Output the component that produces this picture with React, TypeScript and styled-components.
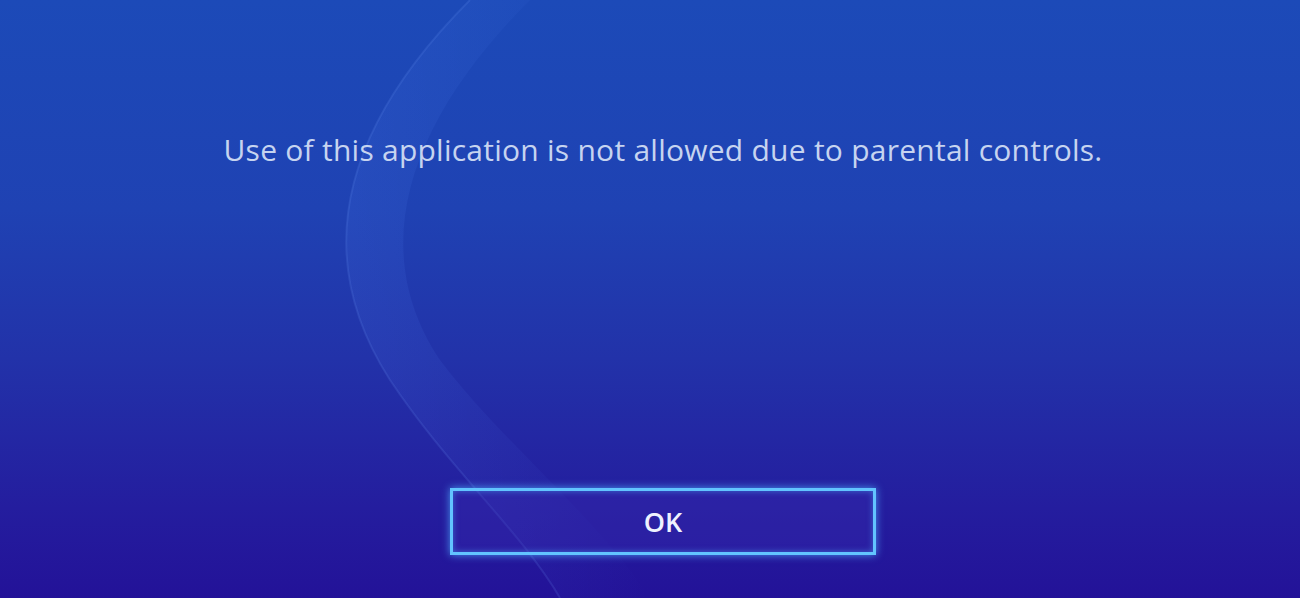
import styled, { createGlobalStyle } from 'styled-components';

const GlobalStyle = createGlobalStyle`
  html, body {
    margin: 0;
    padding: 0;
    height: 100%;
    overflow: hidden;
  }
  #root {
    height: 100%;
  }
`;

export default function App() {
  return (
    <>
      <GlobalStyle />
      <Screen>
        <Wave viewBox="0 0 1300 598" preserveAspectRatio="none" aria-hidden>
          <defs>
            <linearGradient id="band" x1="0" y1="0" x2="1" y2="0">
              <stop offset="0" stopColor="#5a8cff" stopOpacity="0.12" />
              <stop offset="1" stopColor="#5a8cff" stopOpacity="0" />
            </linearGradient>
          </defs>
          <path
            d="M470 0 C 360 110, 300 240, 390 380 C 450 470, 520 530, 560 598 L 650 598 C 600 520, 500 440, 440 360 C 360 240, 420 110, 530 0 Z"
            fill="url(#band)"
          />
          <path
            d="M470 0 C 360 110, 300 240, 390 380 C 450 470, 520 530, 560 598"
            fill="none"
            stroke="#7aa4ff"
            strokeOpacity="0.14"
            strokeWidth="2"
          />
        </Wave>
        <Message>Use of this application is not allowed due to parental controls.</Message>
        <Spacer />
        <OkButton>OK</OkButton>
      </Screen>
    </>
  );
}

const Screen = styled.div`
  position: relative;
  width: 1300px;
  height: 598px;
  overflow: hidden;
  display: flex;
  flex-direction: column;
  align-items: center;
  padding: 128px 0 43px 26px;
  box-sizing: border-box;
  background: linear-gradient(
    180deg,
    #1c4ab8 0%,
    #1f42b3 35%,
    #2232a9 60%,
    #241d9e 85%,
    #231298 100%
  );
  font-family: 'Open Sans', 'Noto Sans', sans-serif;
`;

const Wave = styled.svg`
  position: absolute;
  inset: 0;
  width: 100%;
  height: 100%;
  pointer-events: none;
`;

const Message = styled.p`
  position: relative;
  margin: 0;
  font-size: 30px;
  line-height: 44px;
  color: #c6d4f0;
  letter-spacing: 0.25px;
`;

const Spacer = styled.div`
  flex: 1;
`;

const OkButton = styled.button`
  position: relative;
  width: 426px;
  height: 67px;
  box-sizing: border-box;
  border: 3px solid #62c4ff;
  background: rgba(60, 45, 180, 0.3);
  box-shadow: 0 0 8px rgba(80, 180, 255, 0.8), inset 0 0 6px rgba(80, 180, 255, 0.5);
  color: #eef2ff;
  font-family: 'Open Sans', 'Noto Sans', sans-serif;
  font-size: 27px;
  font-weight: 600;
  cursor: pointer;
`;
